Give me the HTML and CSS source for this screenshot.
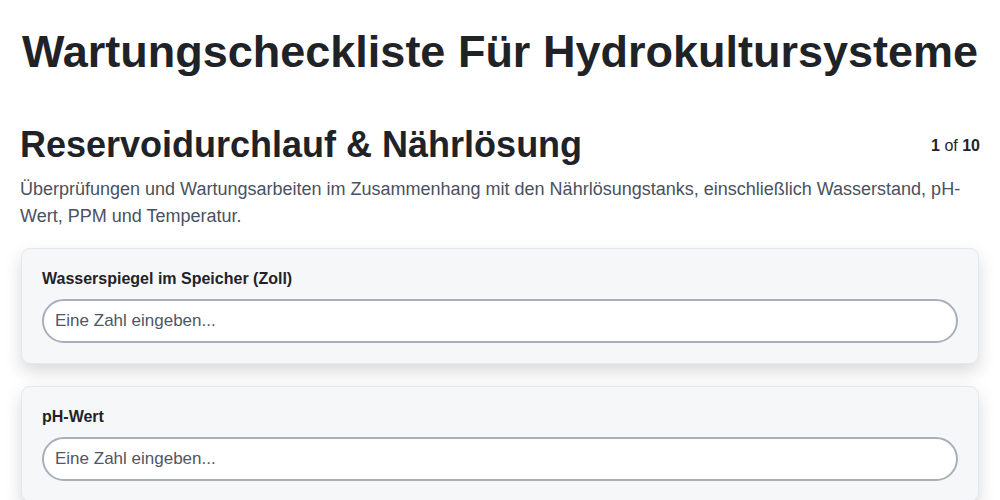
FILE: index.html
```html
<!DOCTYPE html>
<html lang="de">
<head>
<meta charset="utf-8">
<title>Wartungscheckliste</title>
<link rel="stylesheet" href="styles.css">
</head>
<body>
<div class="page">
  <h1 class="title">Wartungscheckliste Für Hydrokultursysteme</h1>
  <section class="section">
    <div class="section-head">
      <h2 class="section-title">Reservoidurchlauf &amp; Nährlösung</h2>
      <div class="counter"><b>1</b> of <b>10</b></div>
    </div>
    <p class="section-desc">Überprüfungen und Wartungsarbeiten im Zusammenhang mit den Nährlösungstanks, einschließlich Wasserstand, pH-Wert, PPM und Temperatur.</p>
    <div class="card">
      <label class="card-label">Wasserspiegel im Speicher (Zoll)</label>
      <input class="card-input" type="text" placeholder="Eine Zahl eingeben...">
    </div>
    <div class="card">
      <label class="card-label">pH-Wert</label>
      <input class="card-input" type="text" placeholder="Eine Zahl eingeben...">
    </div>
  </section>
</div>
</body>
</html>
```
FILE: styles.css
```css
* { box-sizing: border-box; }
html, body { margin: 0; padding: 0; background: #fff; }
body {
  font-family: "Liberation Sans", Arial, sans-serif;
  color: #1f2328;
}
.page {
  padding: 0 20px;
}
.title {
  margin: 0 -20px;
  padding-top: 27px;
  text-align: center;
  white-space: nowrap;
  font-size: 45px;
  line-height: 50px;
  font-weight: 700;
  color: #1f2328;
}
.section {
  margin-top: 47px;
}
.section-head {
  display: flex;
  justify-content: space-between;
  align-items: flex-start;
}
.section-title {
  margin: 0;
  font-size: 36px;
  line-height: 42px;
  font-weight: 700;
  color: #1f2328;
}
.counter {
  font-size: 16px;
  line-height: 20px;
  color: #1f2328;
  padding-top: 12px;
}
.section-desc {
  margin: 10px 0 18px;
  font-size: 18px;
  line-height: 27px;
  color: #4a5160;
}
.card {
  display: flex;
  flex-direction: column;
  background: #f6f7f9;
  border: 1px solid #e4e7eb;
  border-radius: 9px;
  padding: 20px 20px 20px;
  margin: 0 1px 22px;
  box-shadow: 0 8px 18px rgba(0, 0, 0, 0.15);
}
.card-label {
  font-size: 16px;
  font-weight: 700;
  line-height: 20px;
  color: #1f2328;
  margin-bottom: 10px;
}
.card-input {
  height: 44px;
  border: 2px solid #a7b0ba;
  border-radius: 22px;
  background: #fff;
  padding: 0 11px;
  font-family: "Liberation Sans", Arial, sans-serif;
  font-size: 17px;
  color: #1f2328;
}
.card-input::placeholder {
  color: #4f5665;
  opacity: 1;
}
```
